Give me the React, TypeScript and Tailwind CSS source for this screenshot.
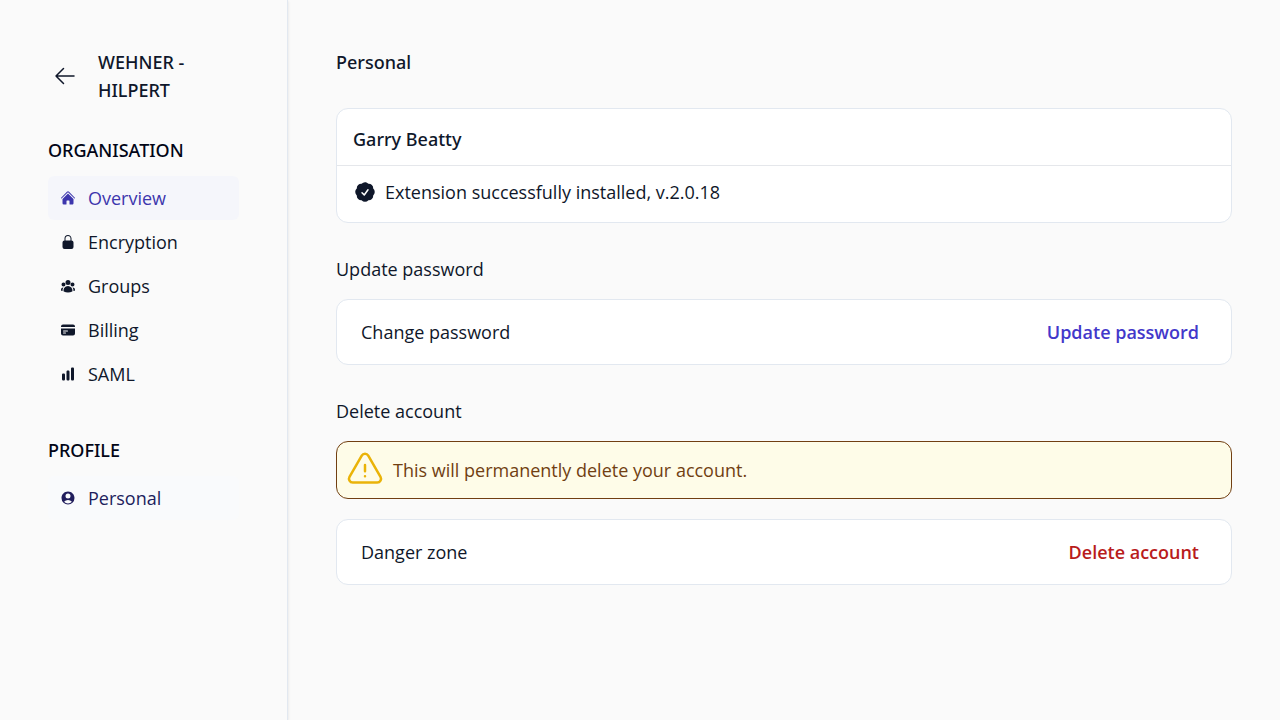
import type { IconType } from "react-icons";
import {
  HiChartBar,
  HiCheckBadge,
  HiCreditCard,
  HiHome,
  HiLockClosed,
  HiOutlineArrowLeft,
  HiOutlineExclamationTriangle,
  HiUserCircle,
  HiUserGroup,
} from "react-icons/hi2";

type NavItem = { label: string; icon: IconType; style?: string };

const SECTIONS: { title: string; items: NavItem[] }[] = [
  {
    title: "ORGANISATION",
    items: [
      { label: "Overview", icon: HiHome, style: "bg-[#f5f6fb] text-[#3d36ad]" },
      { label: "Encryption", icon: HiLockClosed },
      { label: "Groups", icon: HiUserGroup },
      { label: "Billing", icon: HiCreditCard },
      { label: "SAML", icon: HiChartBar },
    ],
  },
  {
    title: "PROFILE",
    items: [{ label: "Personal", icon: HiUserCircle, style: "bg-[#f9fafc] text-[#211d5c]" }],
  },
];

function Sidebar() {
  return (
    <aside className="w-72 shrink-0 border-r border-slate-200 px-12 py-12 shadow-sm">
      <div className="flex items-center gap-4">
        <button aria-label="Back" className="shrink-0 px-[5px] py-1">
          <HiOutlineArrowLeft size={24} />
        </button>
        <h1 className="font-['Noto_Sans',sans-serif] font-medium">WEHNER - HILPERT</h1>
      </div>

      <nav className="mt-8 space-y-10">
        {SECTIONS.map((section) => (
          <div key={section.title}>
            <h2 className="font-['Noto_Sans',sans-serif] font-medium text-[#020617]">{section.title}</h2>
            <ul className="mt-3">
              {section.items.map(({ label, icon: Icon, style }) => (
                <li key={label}>
                  <a href="#" className={`flex h-11 items-center gap-3 rounded-md px-3 ${style ?? ""}`}>
                    <Icon size={16} />
                    {label}
                  </a>
                </li>
              ))}
            </ul>
          </div>
        ))}
      </nav>
    </aside>
  );
}

function ActionCard({ label, action, color }: { label: string; action: string; color: string }) {
  return (
    <div className="flex items-center justify-between rounded-xl border border-slate-200 bg-white py-4 pr-8 pl-6">
      <span className="leading-8">{label}</span>
      <button className={`leading-8 font-semibold ${color}`}>{action}</button>
    </div>
  );
}

export default function App() {
  return (
    <div className="flex min-h-screen bg-[#fafafa] font-['Open_Sans',sans-serif] text-lg leading-7 text-[#0f172a]">
      <Sidebar />

      <main className="min-w-0 flex-1 p-12">
        <h2 className="font-['Noto_Sans',sans-serif] font-medium">Personal</h2>

        <section className="mt-8 rounded-xl border border-slate-200 bg-white">
          <h3 className="border-b border-gray-200 px-4 pt-4 pb-3 font-['Noto_Sans',sans-serif] font-medium">
            Garry Beatty
          </h3>
          <p className="flex items-center gap-2 px-4 pt-3 pb-4">
            <HiCheckBadge size={24} />
            Extension successfully installed, v.2.0.18
          </p>
        </section>

        <section className="mt-8">
          <h2 className="mb-4">Update password</h2>
          <ActionCard label="Change password" action="Update password" color="text-[#4338ca]" />
        </section>

        <section className="mt-8">
          <h2 className="mb-4">Delete account</h2>
          <div className="mb-5 flex items-center gap-2 rounded-xl border border-[#713f12] bg-[#fefce8] p-2 text-[#713f12]">
            <HiOutlineExclamationTriangle size={40} className="text-[#eab308]" />
            This will permanently delete your account.
          </div>
          <ActionCard label="Danger zone" action="Delete account" color="text-[#b91c1c]" />
        </section>
      </main>
    </div>
  );
}
